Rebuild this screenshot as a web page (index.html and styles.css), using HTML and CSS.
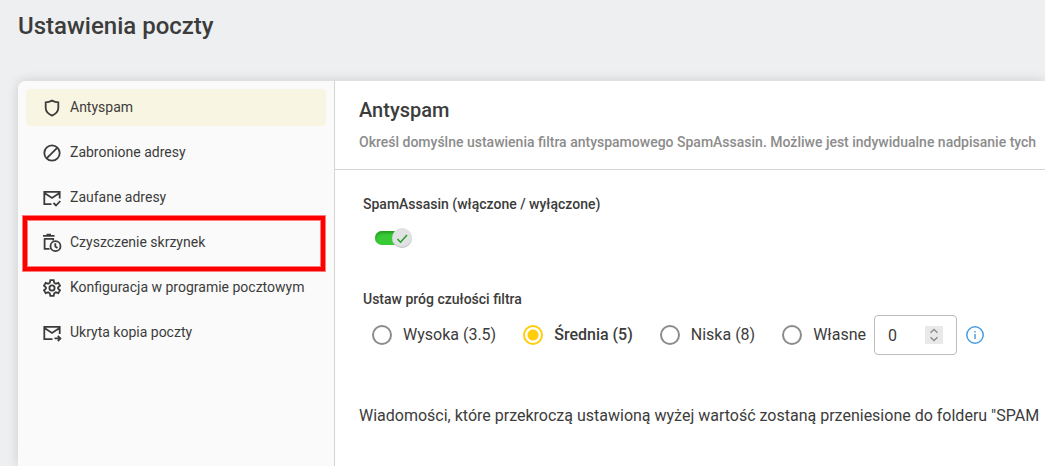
FILE: index.html
```html
<!DOCTYPE html>
<html lang="pl">
<head>
    <meta charset="UTF-8">
    <meta name="viewport" content="width=device-width, initial-scale=1.0">
    <title>Ustawienia poczty</title>
    <link rel="stylesheet" href="styles.css">
</head>
<body>
    <h1 class="page-title">Ustawienia poczty</h1>

    <div class="panel">
        <nav class="sidebar">
            <a href="#antyspam" class="menu-item active">
                <svg class="icon" viewBox="0 0 18 18"><path d="M9 1.6Q12.2 3.3 15.3 3.3V9.2Q15 14 9 16.6Q3 14 2.7 9.2V3.3Q5.8 3.3 9 1.6Z"/></svg>
                <span>Antyspam</span>
            </a>
            <a href="#zabronione" class="menu-item">
                <svg class="icon" viewBox="0 0 18 18"><circle cx="9" cy="9" r="7.7"/><path d="M3.6 14.4L14.4 3.6"/></svg>
                <span>Zabronione adresy</span>
            </a>
            <a href="#zaufane" class="menu-item">
                <svg class="icon" viewBox="0 0 18 18"><path d="M8.5 15.2H1.3V2.8H16.7V9.5M1.5 4L9 9L16.5 4M10.5 14L13 16.5L17.3 12"/></svg>
                <span>Zaufane adresy</span>
            </a>
            <a href="#czyszczenie" class="menu-item marked">
                <svg class="icon" viewBox="0 0 18 18"><path d="M0 1.8H11.5M3.5 .6H8M1.6 4.2V14.8H6.5M1.6 4.8H10.2V6.5"/><circle cx="12.5" cy="12.2" r="5"/><path d="M12.3 9.3V12.5L14.5 14"/></svg>
                <span>Czyszczenie skrzynek</span>
            </a>
            <a href="#konfiguracja" class="menu-item">
                <svg class="icon" viewBox="0 0 18 18"><path d="M7.3 1.2H10.7L11.2 3.7L12.9 4.7L15.3 3.9L17 6.8L15.1 8.4V9.6L17 11.2L15.3 14.1L12.9 13.3L11.2 14.3L10.7 16.8H7.3L6.8 14.3L5.1 13.3L2.7 14.1L1 11.2L2.9 9.6V8.4L1 6.8L2.7 3.9L5.1 4.7L6.8 3.7Z"/><circle cx="9" cy="9" r="2.6"/></svg>
                <span>Konfiguracja w programie pocztowym</span>
            </a>
            <a href="#ukryta-kopia" class="menu-item">
                <svg class="icon" viewBox="0 0 18 18"><path d="M9.5 15.2H1.3V2.8H16.7V10M1.5 4L9 9L16.5 4M11.5 14.4H17M14.8 11.8L17.4 14.4L14.8 17"/></svg>
                <span>Ukryta kopia poczty</span>
            </a>
        </nav>

        <main class="content">
            <header class="content-header">
                <h2>Antyspam</h2>
                <p>Określ domyślne ustawienia filtra antyspamowego SpamAssasin. Możliwe jest indywidualne nadpisanie tych</p>
            </header>

            <form class="settings">
                <label class="setting-label" for="spamassasin">SpamAssasin (włączone / wyłączone)</label>
                <div class="switch">
                    <input type="checkbox" id="spamassasin" checked>
                    <span class="knob">
                        <svg viewBox="0 0 20 20"><path d="M5.5 11L8.5 14.2L15 7"/></svg>
                    </span>
                </div>

                <fieldset class="threshold">
                    <legend class="setting-label">Ustaw próg czułości filtra</legend>
                    <div class="options">
                        <label class="option"><input type="radio" name="prog" value="3.5"><span>Wysoka (3.5)</span></label>
                        <label class="option"><input type="radio" name="prog" value="5" checked><span>Średnia (5)</span></label>
                        <label class="option"><input type="radio" name="prog" value="8"><span>Niska (8)</span></label>
                        <label class="option"><input type="radio" name="prog" value="custom"><span>Własne</span></label>
                        <div class="number-box">
                            <input type="number" id="customValue" value="0" aria-label="Własna wartość">
                            <div class="stepper">
                                <button type="button" aria-label="Zwiększ" onclick="customValue.stepUp()"><svg viewBox="0 0 18 9"><path d="M5.5 6.8L9 3.4L12.5 6.8"/></svg></button>
                                <button type="button" aria-label="Zmniejsz" onclick="customValue.stepDown()"><svg viewBox="0 0 18 9"><path d="M5.5 2.2L9 5.6L12.5 2.2"/></svg></button>
                            </div>
                        </div>
                        <button type="button" class="info" aria-label="Informacja">
                            <svg viewBox="0 0 18 18"><circle cx="9" cy="9" r="8.2"/><path d="M9 8V13M9 5V6.6"/></svg>
                        </button>
                    </div>
                </fieldset>

                <p class="note">Wiadomości, które przekroczą ustawioną wyżej wartość zostaną przeniesione do folderu "SPAM</p>
            </form>
        </main>
    </div>
</body>
</html>
```
FILE: styles.css
```css
* {
    box-sizing: border-box;
}

body {
    margin: 0;
    min-height: 100vh;
    display: flex;
    flex-direction: column;
    overflow-x: hidden;
    background-color: #eeeff1;
    color: #3c3c3b;
    font-family: Roboto, "Liberation Sans", sans-serif;
    font-size: 16px;
}

h1, h2, p {
    margin: 0;
    font-weight: 500;
}

svg {
    display: block;
    fill: none;
    stroke: currentColor;
}

.page-title {
    padding: 10px 18px 39px;
    font-size: 24px;
    line-height: 32px;
}

.panel {
    flex: 1;
    display: flex;
    margin-left: 18px;
    background-color: #fff;
    border-radius: 8px 0 0 0;
    box-shadow: 0 0 12px rgba(0, 0, 0, 0.15);
}

/* menu */
.sidebar {
    flex: 0 0 317px;
    display: flex;
    flex-direction: column;
    gap: 8px;
    padding: 8px;
    background-color: #fafafa;
    border-right: 1px solid #d4d4d4;
    border-radius: 8px 0 0 0;
}

.menu-item {
    position: relative;
    display: flex;
    align-items: center;
    gap: 9px;
    height: 37px;
    padding: 0 17px;
    border-radius: 4px;
    color: inherit;
    font-size: 14px;
    line-height: 20px;
    text-decoration: none;
    white-space: nowrap;
}

.menu-item span {
    padding-bottom: 2px;
}

.menu-item.active {
    background-color: #f9f5e3;
}

.menu-item.marked::after {
    content: "";
    position: absolute;
    inset: -8px 1px -10px -3px;
    border: 4px solid #f00;
    box-shadow: 0 0 0 1px rgba(255, 0, 0, 0.5), inset 0 0 0 1px rgba(255, 0, 0, 0.5);
}

.icon {
    flex: none;
    width: 18px;
    height: 18px;
    stroke-width: 1.8;
    overflow: visible;
}

/* content */
.content {
    flex: 1;
    min-width: 0;
    overflow: hidden;
    white-space: nowrap;
}

.content-header {
    padding: 17px 24px;
    border-bottom: 1px solid #d4d4d4;
}

.content-header h2 {
    font-size: 20px;
    line-height: 24px;
}

.content-header p {
    padding-top: 10px;
    color: #8c8c8c;
    font-size: 14px;
    line-height: 20px;
}

.settings {
    padding: 24px 28px;
}

.setting-label {
    display: block;
    padding: 0;
    font-size: 14px;
    font-weight: 500;
    line-height: 20px;
}

.switch {
    position: relative;
    width: 37px;
    height: 20px;
    margin: 14px 12px 41px;
    display: flex;
    align-items: center;
}

.switch input {
    appearance: none;
    width: 30px;
    height: 14px;
    margin: 0;
    border-radius: 7px;
    background-color: #bbb;
    cursor: pointer;
}

.switch input:checked {
    background-color: #38cb35;
    box-shadow: inset 0 2px 3px #249a22;
}

.knob {
    position: absolute;
    top: 0;
    right: 0;
    width: 20px;
    height: 20px;
    border-radius: 50%;
    background-color: #e1e2e4;
    box-shadow: inset 0 -1px 1px #c4c4c4;
    color: #209c20;
    pointer-events: none;
}

.knob svg {
    stroke-width: 1.4;
}

.threshold {
    min-width: 0;
    margin: 0;
    padding: 0;
    border: 0;
}

.options {
    display: flex;
    align-items: center;
    padding: 6px 9px;
}

.option {
    display: flex;
    align-items: center;
    gap: 11px;
    margin-right: 27px;
    line-height: 20px;
    cursor: pointer;
}

.option:last-of-type {
    margin-right: 8px;
}

.option input {
    appearance: none;
    flex: none;
    width: 20px;
    height: 20px;
    margin: 0;
    border: 2px solid #8c8c8c;
    border-radius: 50%;
}

.option input:checked {
    border-color: #ffcd0a;
    background: radial-gradient(circle, #ffcd0a 5px, #fff 6px);
}

.option input:checked + span {
    font-weight: 500;
}

.number-box {
    display: flex;
    align-items: center;
    width: 83px;
    height: 40px;
    padding: 0 13px;
    border: 1px solid #bcbcbc;
    border-radius: 4px;
}

.number-box input {
    appearance: textfield;
    flex: 1;
    min-width: 0;
    padding: 0;
    border: 0;
    outline: 0;
    background: none;
    color: inherit;
    font: inherit;
}

.number-box input::-webkit-inner-spin-button {
    display: none;
}

.stepper {
    width: 18px;
    background-color: #e9e9ea;
    color: #8c8c8c;
}

.stepper button,
.info {
    display: block;
    padding: 0;
    border: 0;
    background: none;
    color: inherit;
    cursor: pointer;
}

.stepper svg {
    width: 18px;
    height: 9px;
    stroke-width: 1.4;
}

.info {
    margin-left: 9px;
    color: #4d9de0;
}

.info svg {
    width: 18px;
    height: 18px;
    stroke-width: 1.5;
}

.note {
    margin: 45px -4px 0;
    font-weight: 400;
    line-height: 20px;
}
```
